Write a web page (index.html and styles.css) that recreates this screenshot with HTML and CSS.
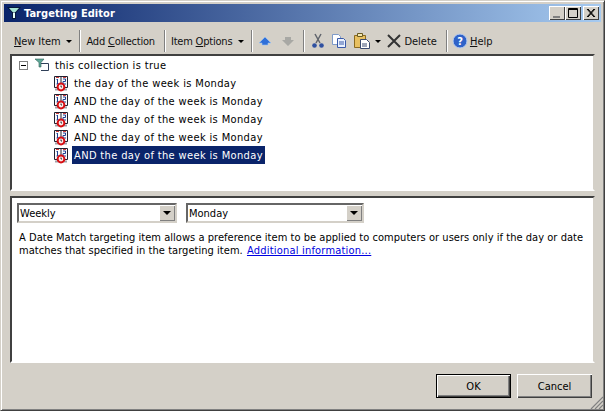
FILE: index.html
```html
<!DOCTYPE html>
<html lang="en">
<head>
    <meta charset="UTF-8">
    <title>Targeting Editor</title>
    <link rel="stylesheet" href="styles.css">
</head>
<body>
    <svg class="defs" width="0" height="0">
        <symbol id="date" viewBox="0 0 16 18">
            <path d="M1.500 2.500h13v11h-13z" fill="#fafafa" stroke="#202030"/>
            <path d="M2 14.500h12v2H2z" fill="#a0a0a8"/>
            <path d="M8 2v11" stroke="#202030"/>
            <path d="M3 3.500h3M10 3.500h3" stroke="#d04040"/>
            <path d="M3.500 6l1-1v5M3.500 10h2.500M10 5h2.500v2.500h-2.500v2.500h3" fill="none" stroke="#1c3f94"/>
            <circle cx="8" cy="13" r="3.400" fill="#fbeaea" stroke="#d80e12" stroke-width="2"/>
            <path d="M8 11.500v1.500h1" fill="none" stroke="#333"/>
        </symbol>
    </svg>

    <div class="window">
        <div class="titlebar">
            <svg class="title-icon" width="14" height="14" viewBox="0 0 14 14">
                <path d="M0 1h14L9 7v6H5V7z" fill="#06183c"/>
                <path d="M2 2h10L8.500 6h-3z" fill="#a6e4d4"/>
                <path d="M6 6.500h2V12H6z" fill="#e8fff8"/>
            </svg>
            <span class="title-text">Targeting Editor</span>
            <div class="caption-buttons">
                <span class="caption-btn"><svg width="16" height="14"><path d="M4 10h7v2H4z" fill="#808080"/></svg></span>
                <span class="caption-btn"><svg width="16" height="14"><path d="M3.500 2.500h9v9h-9zM3 3.500h10" fill="none" stroke="#000"/></svg></span>
                <span class="caption-btn close"><svg width="16" height="14"><path d="M4 3l7 8M5 3l7 8M11 3l-7 8M12 3l-7 8" stroke="#000"/></svg></span>
            </div>
        </div>

        <div class="toolbar">
            <span class="tool tool-new"><span><u>N</u>ew Item</span><i class="caret"></i></span>
            <span class="sep"></span>
            <span class="tool tool-add"><span>Add <u>C</u>ollection</span></span>
            <span class="sep sep-wide"></span>
            <span class="tool tool-options"><span>Item <u>O</u>ptions</span><i class="caret"></i></span>
            <span class="sep"></span>
            <svg class="icon icon-up" width="16" height="16" viewBox="0 0 16 16"><path d="M8 4l6 6h-3v2H5v-2H2z" fill="#2f6fd8" stroke="#9cc4f4" stroke-width=".6"/></svg>
            <svg class="icon icon-down" width="16" height="16" viewBox="0 0 16 16"><path d="M5 4h6v3h3l-6 6-6-6h3z" fill="#a8a8a4"/></svg>
            <span class="sep"></span>
            <svg class="icon icon-cut" width="14" height="16" viewBox="0 0 14 16"><path d="M4 1l5 9M10 1L5 10" stroke="#60646c" stroke-width="1.500" fill="none"/><circle cx="3.500" cy="12.500" r="2.300" fill="#2f50a0"/><circle cx="10.500" cy="12.500" r="2.300" fill="#2f50a0"/></svg>
            <svg class="icon icon-copy" width="16" height="16" viewBox="0 0 16 16"><path d="M1.500 1.500h6l2 2v8h-8z" fill="#fff" stroke="#7f9bc8"/><path d="M6.500 5.500h6l2 2v7h-8z" fill="#eaf2ff" stroke="#3a5aa8"/><path d="M8 9h5M8 11h5" stroke="#3a5aa8"/></svg>
            <svg class="icon icon-paste" width="18" height="18" viewBox="0 0 18 18"><path d="M1.500 3.500h11v12h-11z" fill="#e8c060" stroke="#8a6a20"/><path d="M4.500 1.500h5v3h-5z" fill="#f4e8b0" stroke="#6a5a20"/><path d="M7.500 7.500h6l3 3v6h-9z" fill="#fff" stroke="#3a4a70"/><path d="M9 12h5M9 14h5" stroke="#3a4a70"/></svg>
            <i class="caret caret-paste"></i>
            <span class="tool tool-delete"><svg width="14" height="14" viewBox="0 0 14 14"><path d="M1 1l12 12M13 1L1 13" stroke="#333" stroke-width="2"/></svg><span>Delete</span></span>
            <span class="sep sep-wide"></span>
            <span class="tool tool-help"><svg width="16" height="16" viewBox="0 0 16 16"><circle cx="8" cy="8" r="7" fill="#2f62c8" stroke="#b8cdf0"/><text class="help-mark" x="8" y="12" text-anchor="middle">?</text></svg><span><u>H</u>elp</span></span>
        </div>

        <div class="panel tree">
            <div class="tree-root">
                <span class="expander"></span>
                <svg class="root-icon" width="16" height="14" viewBox="0 0 16 14">
                    <path d="M1 1h9L7 4.500V9H5V4.500z" fill="#5fa898" stroke="#2f5f58" stroke-width=".6"/>
                    <path d="M7 5.500h7.500v7H7" fill="none" stroke="#304058"/>
                </svg>
                <span class="tree-label">this collection is true</span>
            </div>
            <ul class="tree-items">
                <li><svg class="date-icon"><use href="#date"/></svg><span class="tree-label">the day of the week is Monday</span></li>
                <li><svg class="date-icon"><use href="#date"/></svg><span class="tree-label">AND the day of the week is Monday</span></li>
                <li><svg class="date-icon"><use href="#date"/></svg><span class="tree-label">AND the day of the week is Monday</span></li>
                <li><svg class="date-icon"><use href="#date"/></svg><span class="tree-label">AND the day of the week is Monday</span></li>
                <li><svg class="date-icon"><use href="#date"/></svg><span class="tree-label selected">AND the day of the week is Monday</span></li>
            </ul>
        </div>

        <div class="panel details">
            <div class="combos">
                <span class="combo combo-period">Weekly<i class="combo-btn"></i></span>
                <span class="combo combo-day">Monday<i class="combo-btn"></i></span>
            </div>
            <p class="desc">A Date Match targeting item allows a preference item to be applied to computers or users only if the day or date matches that specified in the targeting item. <a href="#">Additional information...</a></p>
        </div>

        <div class="footer">
            <span class="btn btn-default">OK</span>
            <span class="btn">Cancel</span>
            <svg class="grip" width="13" height="13" viewBox="0 0 13 13"><path d="M13 1L1 13M13 5l-8 8M13 9l-4 4" stroke="#808080" stroke-width="1.200"/></svg>
        </div>
    </div>
</body>
</html>
```

FILE: styles.css
```css
html, body {
    margin: 0;
    padding: 0;
}

body {
    font-family: "DejaVu Sans", sans-serif;
    font-stretch: condensed;
    font-size: 11px;
    color: #000;
    overflow: hidden;
}

.defs {
    display: block;
    height: 0;
}

.window {
    box-sizing: border-box;
    width: 605px;
    height: 411px;
    padding: 3px;
    background-color: #d4d0c8;
    border: 1px solid;
    border-color: #d4d0c8 #404040 #404040 #d4d0c8;
    box-shadow: inset 1px 1px 0 #fff, inset -1px -1px 0 #808080;
    display: flex;
    flex-direction: column;
    position: relative;
}

.titlebar {
    height: 18px;
    flex: none;
    background: linear-gradient(to right, #0a246a, #a6caf0);
    display: flex;
    align-items: center;
    color: #fff;
    padding: 0 2px 0 3px;
}

.title-icon {
    margin-right: 3px;
}

.title-text {
    font-weight: bold;
    letter-spacing: .05px;
    flex: 1;
}

.caption-buttons {
    display: flex;
}

.caption-btn {
    width: 16px;
    height: 14px;
    background-color: #d4d0c8;
    box-shadow: inset 1px 1px 0 #fff, inset -1px -1px 0 #404040;
    display: block;
}

.caption-btn svg {
    display: block;
}

.caption-btn.close {
    margin-left: 2px;
}

.toolbar {
    height: 31px;
    flex: none;
    display: flex;
    align-items: center;
    padding: 5px 0 0 10px;
    box-sizing: border-box;
    margin-top: 1px;
    color: #111;
}

.tool {
    display: flex;
    align-items: center;
    white-space: nowrap;
}

.caret {
    display: inline-block;
    border: 3px solid transparent;
    border-top: 3px solid #000;
    border-bottom: 0;
    margin-left: 6px;
}

.sep {
    width: 1px;
    height: 22px;
    background-color: #808080;
    border-right: 1px solid #fff;
    margin-left: 7px;
}

.sep-wide {
    margin-left: 9px;
}

.icon {
    flex: none;
}

.tool-new {
    letter-spacing: -.1px;
}

.tool-add,
.tool-options {
    margin-left: 5px;
    letter-spacing: -.2px;
}

.icon-up {
    margin-left: 4px;
}

.icon-down {
    margin-left: 7px;
}

.icon-cut {
    margin-left: 6px;
}

.icon-copy {
    margin-left: 6px;
}

.icon-paste {
    margin-left: 6px;
}

.caret-paste {
    margin-left: 4px;
}

.tool-delete {
    margin-left: 6px;
}

.tool-delete svg {
    margin-right: 3px;
}

.tool-help {
    margin-left: 4px;
}

.tool-help svg {
    margin-right: 2px;
}

.help-mark {
    fill: #fff;
    font-size: 11px;
    font-weight: bold;
}

.panel {
    background-color: #fff;
    border: 2px solid;
    border-color: #404040 #d4d0c8 #fff #404040;
    box-sizing: border-box;
    margin: 0 6px;
}

.tree {
    height: 137px;
    flex: none;
    padding: 0 0 0 7px;
}

.tree-root {
    height: 18px;
    display: flex;
    align-items: center;
}

.expander {
    width: 9px;
    height: 9px;
    box-sizing: border-box;
    border: 1px solid #808080;
    background: linear-gradient(#000, #000) center / 5px 1px no-repeat #fff;
    margin-right: 6px;
}

.root-icon {
    margin-right: 3px;
}

.tree-items {
    list-style-type: none;
    margin: 0;
    padding: 0 0 0 34px;
}

.tree-items li {
    height: 18px;
    display: flex;
    align-items: center;
}

.date-icon {
    width: 16px;
    height: 18px;
    margin-right: 3px;
}

.tree-label {
    padding: 1px 2px 0;
    height: 17px;
    line-height: 17px;
    white-space: nowrap;
    letter-spacing: .36px;
}

.selected {
    background-color: #0a246a;
    color: #fff;
}

.details {
    margin-top: 5px;
    height: 167px;
    flex: none;
    padding: 5px 5px 0 5px;
}

.combos {
    display: flex;
    gap: 9px;
}

.combo {
    box-sizing: border-box;
    height: 20px;
    border: 2px solid;
    border-color: #666 #d4d0c8 #d4d0c8 #666;
    line-height: 18px;
    padding-left: 1px;
    position: relative;
}

.combo-period {
    width: 160px;
}

.combo-day {
    width: 178px;
}

.combo-btn {
    position: absolute;
    right: 0;
    top: 0;
    width: 16px;
    height: 16px;
    background-color: #d4d0c8;
    box-shadow: inset 1px 1px 0 #fff, inset -1px -1px 0 #808080;
}

.combo-btn::after {
    content: "";
    position: absolute;
    left: 4px;
    top: 6px;
    border: 4px solid transparent;
    border-top: 4px solid #000;
    border-bottom: 0;
}

.desc {
    margin: 8px 0 0 2px;
    line-height: 13px;
    letter-spacing: .04px;
}

.desc a {
    color: #0000e0;
    letter-spacing: .2px;
    margin-left: 1px;
}

.footer {
    flex: 1;
    display: flex;
    justify-content: flex-end;
    gap: 6px;
    padding: 11px 9px 0 0;
}

.btn {
    box-sizing: border-box;
    width: 75px;
    height: 24px;
    background-color: #d4d0c8;
    box-shadow: inset 1px 1px 0 #fff, inset -1px -1px 0 #404040, inset -2px -2px 0 #808080;
    display: flex;
    align-items: center;
    justify-content: center;
}

.btn-default {
    border: 1px solid #000;
}

.grip {
    position: absolute;
    right: 1px;
    bottom: 1px;
}
```
